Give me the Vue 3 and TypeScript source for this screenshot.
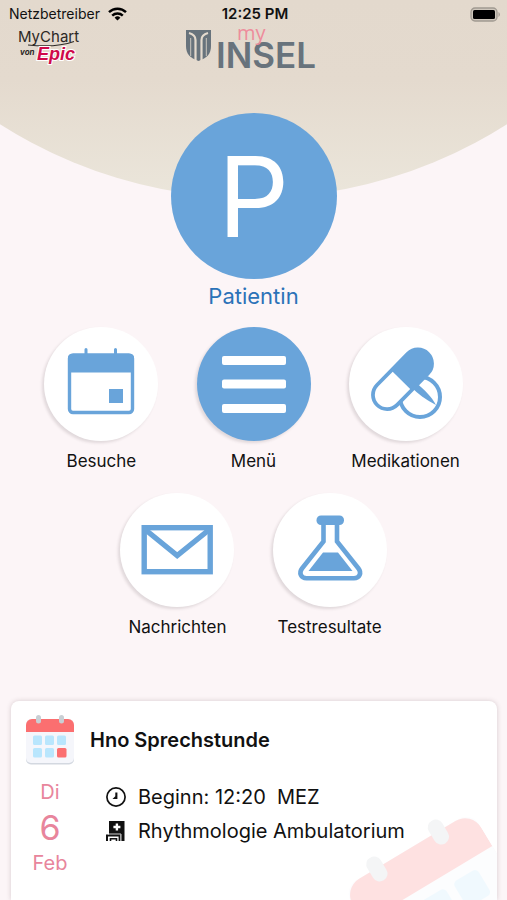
<script setup lang="ts">
type IconName = 'visits' | 'menu' | 'meds' | 'messages' | 'results'

interface Shortcut {
  label: string
  icon: IconName
}

const shortcuts: Shortcut[] = [
  { label: 'Besuche', icon: 'visits' },
  { label: 'Menü', icon: 'menu' },
  { label: 'Medikationen', icon: 'meds' },
  { label: 'Nachrichten', icon: 'messages' },
  { label: 'Testresultate', icon: 'results' },
]

const patient = { initial: 'P', name: 'Patientin' }

const appointment = {
  title: 'Hno Sprechstunde',
  weekday: 'Di',
  day: 6,
  month: 'Feb',
  start: 'Beginn: 12:20\u00a0 MEZ',
  place: 'Rhythmologie Ambulatorium',
}
</script>

<template>
  <div class="page">
    <svg class="defs" aria-hidden="true">
      <symbol id="calendar" viewBox="0 0 48 50">
        <rect x="0" y="6" width="48" height="43.5" rx="5" fill="#d3d8e0" />
        <rect x="0" y="4" width="48" height="44" rx="5" fill="#f5f6fb" />
        <path d="M0 17V10a6 6 0 0 1 6-6H42a6 6 0 0 1 6 6V17Z" fill="#fb6f70" />
        <g fill="#b9e6fd">
          <rect x="7" y="20.500" width="9" height="9.500" rx="1.500" />
          <rect x="19" y="20.500" width="9" height="9.500" rx="1.500" />
          <rect x="31" y="20.500" width="9" height="9.500" rx="1.500" />
          <rect x="7" y="33" width="9" height="9.500" rx="1.500" />
          <rect x="19" y="33" width="9" height="9.500" rx="1.500" />
        </g>
        <rect x="31" y="33" width="9.500" height="9.500" rx="1.500" fill="#fb6f70" />
        <rect x="10" y="0" width="5" height="8.500" rx="2.500" fill="#c9cfd4" />
        <rect x="33" y="0" width="5" height="8.500" rx="2.500" fill="#c9cfd4" />
      </symbol>
    </svg>

    <div class="backdrop"></div>

    <div class="status">
      <span class="carrier">
        Netzbetreiber
        <svg width="19" height="14" viewBox="0 0 19 14" aria-hidden="true">
          <g fill="none" stroke="#000" stroke-width="2.400">
            <path d="M1 5.200a12.200 12.200 0 0 1 17 0" />
            <path d="M4.200 8.600a7.600 7.600 0 0 1 10.600 0" />
          </g>
          <path d="M9.500 13.600 6.600 10.700a4.100 4.100 0 0 1 5.800 0Z" />
        </svg>
      </span>
      <span class="clock">12:25 PM</span>
      <span class="battery">
        <svg width="31" height="15" viewBox="0 0 31 15" aria-hidden="true">
          <rect x="1" y="1" width="26" height="13" rx="4" fill="#cfc7bc" stroke="#a19a91" stroke-width="1.300" />
          <rect x="3" y="3" width="22" height="9" rx="1.500" fill="#000" />
          <path d="M28.500 5v5a3 3 0 0 0 0-5Z" fill="#a19a91" />
        </svg>
      </span>
    </div>

    <header class="brand">
      <svg class="mychart" width="70" height="40" viewBox="0 0 70 40" role="img" aria-label="MyChart von Epic">
        <text x="3" y="14" class="logo-mychart">MyChart</text>
        <path d="M13 17C27 18.500 45 18.500 59 13.500" fill="none" stroke="#2c2825" stroke-width="1.200" />
        <text x="5" y="27" class="logo-von">von</text>
        <text x="22" y="32" class="logo-epic">Epic</text>
      </svg>
      <svg class="insel" width="136" height="50" viewBox="0 0 136 50" role="img" aria-label="my INSEL">
        <path d="M0 1H25V17C25 25 21 29 12.500 32 4 29 0 25 0 17Z" fill="#68737c" />
        <g fill="none" stroke="#e4dace" stroke-width="2.200">
          <path d="M3 4C7 5 9.500 7 9.500 11V32" />
          <path d="M22 4C18 5 15.500 7 15.500 11V32" />
        </g>
        <path d="M4.700 9V27M20.300 9V27" stroke="#e4dace" stroke-width="0.800" />
        <text x="30" y="39" class="logo-insel">INSEL</text>
        <text x="51" y="11" class="logo-my">my</text>
      </svg>
      <span></span>
    </header>

    <main class="content">
      <button class="patient" type="button">
        <span class="avatar">{{ patient.initial }}</span>
        <span class="patient-name">{{ patient.name }}</span>
      </button>

      <nav class="shortcuts">
        <button v-for="s in shortcuts" :key="s.icon" class="shortcut" type="button">
          <span class="disc" :class="{ 'disc-filled': s.icon === 'menu' }">
            <svg viewBox="0 0 114 114" aria-hidden="true">
              <g v-if="s.icon === 'visits'" fill="#69a4da">
                <rect x="25.500" y="28" width="63" height="57.500" rx="3.500" fill="none" stroke="#69a4da" stroke-width="3.400" />
                <path d="M24 45.500V31a4 4 0 0 1 4-4H86a4 4 0 0 1 4 4V45.500Z" />
                <path d="M42 22.500V29M71.500 22.500V29" stroke="#69a4da" stroke-width="3" stroke-linecap="round" />
                <rect x="65" y="62" width="14" height="14" />
              </g>
              <g v-else-if="s.icon === 'menu'" fill="#fff">
                <rect x="25" y="29" width="64" height="9" rx="2" />
                <rect x="25" y="52.500" width="64" height="9" rx="2" />
                <rect x="25" y="77" width="64" height="9" rx="2" />
              </g>
              <g v-else-if="s.icon === 'meds'">
                <circle cx="71" cy="70" r="20" fill="#fff" stroke="#69a4da" stroke-width="4" />
                <path d="M62 60 67 56C75 62 82 69 87 78 77 73 69 67 62 60Z" fill="#69a4da" />
                <g transform="rotate(-45.500 53.500 52.250)">
                  <rect x="15.500" y="36.250" width="76" height="32" rx="16" fill="#69a4da" />
                  <path d="M52 40V64.500H31.500a12.250 12.250 0 0 1 0-24.500Z" fill="#fff" />
                </g>
              </g>
              <g v-else-if="s.icon === 'messages'" fill="none" stroke="#69a4da" stroke-width="5.400">
                <rect x="24.200" y="34.700" width="66" height="44" />
                <path d="M24.500 36 57.200 62.500 90 36" />
              </g>
              <g v-else fill="#69a4da">
                <rect x="43.500" y="22.500" width="27.500" height="9.500" rx="4.500" />
                <path
                  d="M50.500 30V48.500L29 75.500C25.500 80 28 85.200 33.500 85.200H81C86.500 85.200 89 80 85.500 75.500L64 48.500V30"
                  fill="none"
                  stroke="#69a4da"
                  stroke-width="4.600"
                />
                <path d="M50 59.500H65L79.500 78H35.500Z" />
              </g>
            </svg>
          </span>
          <span class="shortcut-label">{{ s.label }}</span>
        </button>
      </nav>

      <article class="card">
        <svg class="watermark" aria-hidden="true"><use href="#calendar" /></svg>
        <svg class="card-icon" aria-hidden="true"><use href="#calendar" /></svg>
        <h2 class="card-title">{{ appointment.title }}</h2>
        <div class="date">
          <span>{{ appointment.weekday }}</span>
          <span class="day">{{ appointment.day }}</span>
          <span>{{ appointment.month }}</span>
        </div>
        <ul class="details">
          <li>
            <svg width="20" height="20" viewBox="0 0 20 20" aria-hidden="true">
              <circle cx="10" cy="10" r="9.100" fill="none" stroke="#111" stroke-width="1.700" />
              <path d="M11.400 5.500V12H6.500L9.300 9.200V5.500Z" fill="#111" />
            </svg>
            {{ appointment.start }}
          </li>
          <li>
            <svg width="20" height="20" viewBox="0 0 20 20" aria-hidden="true">
              <path d="M3 0H18.500V20H15V14H3Z" fill="#111" />
              <path d="M1 20V14.500H13.600V20" fill="none" stroke="#111" stroke-width="2" />
              <path d="M4.500 20V17.800H10.500V20" fill="none" stroke="#111" stroke-width="1.600" />
              <path d="M2 13H15V20" fill="none" stroke="#fff" stroke-width="0.800" />
              <path d="M10.900 2.500V9.500M7.400 6H14.400" stroke="#fff" stroke-width="2.400" />
            </svg>
            {{ appointment.place }}
          </li>
        </ul>
      </article>
    </main>
  </div>
</template>

<style>
body {
  margin: 0;
  background: #fcf5f7;
}
</style>

<style scoped>
.page {
  position: relative;
  display: flex;
  flex-direction: column;
  min-height: 100vh;
  font-family: Inter, 'Liberation Sans', sans-serif;
  color: #111;
}

.defs {
  position: absolute;
  width: 0;
  height: 0;
}

/* Curved beige area behind the status bar and logos */
.backdrop {
  position: absolute;
  top: 0;
  left: 0;
  right: 0;
  height: 198px;
  background: linear-gradient(#e3d9cd 0, #e4dace 80px, #ebe6db 198px);
  clip-path: ellipse(93% 471px at 50% -273px);
}

.status,
.brand {
  position: relative;
  display: grid;
  grid-template-columns: 1fr auto 1fr;
}

.status {
  align-items: center;
  height: 28px;
  padding: 0 6px 0 9px;
  font-size: 14px;
  line-height: 20px;
}

.carrier {
  display: flex;
  align-items: center;
  gap: 8px;
}

.clock {
  font-size: 15px;
  font-weight: 600;
}

.battery {
  display: flex;
  justify-content: flex-end;
}

.brand {
  height: 85px;
  align-items: start;
  padding: 0 15px;
}

.brand svg {
  overflow: visible;
}

.insel {
  margin-top: 1px;
}

.logo-mychart {
  font: 400 15px Inter, sans-serif;
  fill: #2c2825;
}

.logo-von {
  font: italic 700 8px Inter, sans-serif;
  fill: #2c2825;
}

.logo-epic {
  font: italic 700 18px 'Liberation Sans', sans-serif;
  fill: #cf0a4a;
  stroke: #fff;
  stroke-width: 2px;
  paint-order: stroke;
}

.logo-my {
  font: 400 20px 'Open Sans', sans-serif;
  fill: #ee8c9c;
}

.logo-insel {
  font: 600 35px Inter, sans-serif;
  fill: #68737c;
}

.content {
  position: relative;
  display: flex;
  flex: 1;
  flex-direction: column;
  align-items: center;
}

button {
  padding: 0;
  border: 0;
  background: none;
  color: inherit;
  font: inherit;
  cursor: pointer;
}

.patient {
  display: flex;
  flex-direction: column;
  align-items: center;
  gap: 3px;
}

.avatar {
  display: grid;
  place-items: center;
  width: 166px;
  height: 166px;
  border-radius: 50%;
  background: #69a4da;
  color: #fff;
  font-size: 112px;
  line-height: 166px;
}

.patient-name {
  color: #2b72b8;
  font-size: 22px;
  line-height: 28px;
}

.shortcuts {
  display: flex;
  flex-wrap: wrap;
  justify-content: center;
  align-self: stretch;
  row-gap: 22px;
  padding: 17px 0 64px;
}

.shortcut {
  display: flex;
  flex-direction: column;
  align-items: center;
  gap: 10px;
  width: 30%;
}

.disc {
  width: 114px;
  height: 114px;
  border-radius: 50%;
  background: #fff;
  box-shadow: -2px 2px 3px rgba(60, 40, 50, 0.14);
}

.disc-filled {
  background: #69a4da;
}

.disc svg {
  display: block;
}

.shortcut-label {
  font-size: 17px;
  line-height: 20px;
}

.card {
  position: relative;
  display: grid;
  grid-template-columns: 48px 1fr;
  grid-template-rows: auto 1fr;
  column-gap: 16px;
  row-gap: 12px;
  flex: 1;
  align-self: stretch;
  margin: 0 10px 0 11px;
  padding: 14px 15px 0;
  border-radius: 8px 8px 0 0;
  background: #fff;
  box-shadow: 0 0 5px rgba(70, 40, 50, 0.2);
  overflow: hidden;
}

.watermark {
  position: absolute;
  top: 127px;
  right: -19px;
  width: 150px;
  height: 156px;
  opacity: 0.2;
  transform: rotate(-31deg);
}

.card-icon {
  width: 48px;
  height: 50px;
}

.card-title {
  align-self: center;
  margin: 0;
  font-size: 20px;
  font-weight: 600;
  line-height: 28px;
}

.date {
  position: relative;
  display: flex;
  flex-direction: column;
  align-items: center;
  color: #e8859c;
  font-size: 20px;
  line-height: 30px;
}

.day {
  font-size: 34px;
  line-height: 41px;
}

.details {
  position: relative;
  margin: 0;
  padding: 3px 0 0 16px;
  list-style: none;
  font-size: 20px;
  line-height: 34px;
}

.details li {
  display: flex;
  align-items: center;
  gap: 12px;
}
</style>
